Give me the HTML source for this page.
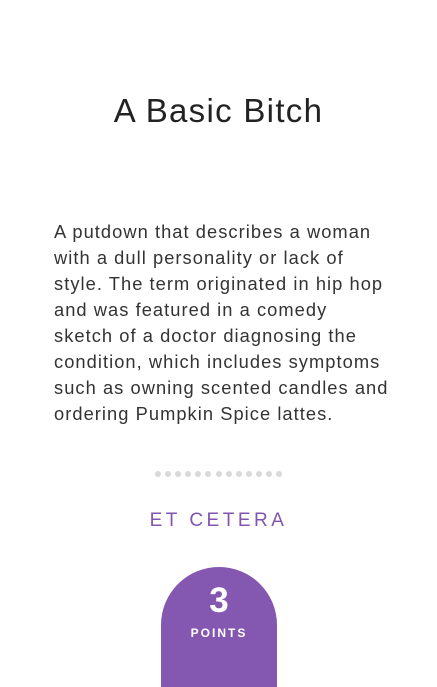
<!DOCTYPE html>
<html><head><style>
body{margin:0;width:437px;height:663px;background:#fff;font-family:"Liberation Sans",sans-serif;position:relative;overflow:hidden}
h1{position:absolute;top:91px;left:0;width:437px;text-align:center;margin:0;font-size:33px;font-weight:normal;color:#222;line-height:40px;letter-spacing:1.3px}
.p{position:absolute;top:219px;left:54px;width:380px;font-size:18.3px;line-height:26px;color:#333;letter-spacing:1.05px;white-space:nowrap}
.dots{position:absolute;top:471px;left:155px;display:flex;gap:4.1px}
.dots i{width:6px;height:6px;border-radius:50%;background:#d9d9d9;display:block}
.cat{position:absolute;top:508px;left:0;width:437px;text-align:center;color:#8255b0;font-size:19px;letter-spacing:3.5px;line-height:26px}
.badge{position:absolute;left:161px;top:567px;width:116px;height:120px;background:#8457b0;border-radius:58px 58px 0 0;color:#fff;text-align:center}
.n{font-size:35px;font-weight:bold;line-height:36px;margin-top:16px}
.pt{font-size:12px;font-weight:bold;letter-spacing:2px;margin-top:7px}
</style></head><body>
<h1>A Basic Bitch</h1>
<div class="p">A putdown that describes a woman<br>with a dull personality or lack of<br>style. The term originated in hip hop<br>and was featured in a comedy<br>sketch of a doctor diagnosing the<br>condition, which includes symptoms<br>such as owning scented candles and<br>ordering Pumpkin Spice lattes.</div>
<div class="dots"><i></i><i></i><i></i><i></i><i></i><i></i><i></i><i></i><i></i><i></i><i></i><i></i><i></i></div>
<div class="cat">ET CETERA</div>
<div class="badge"><div class="n">3</div><div class="pt">POINTS</div></div>
</body></html>
